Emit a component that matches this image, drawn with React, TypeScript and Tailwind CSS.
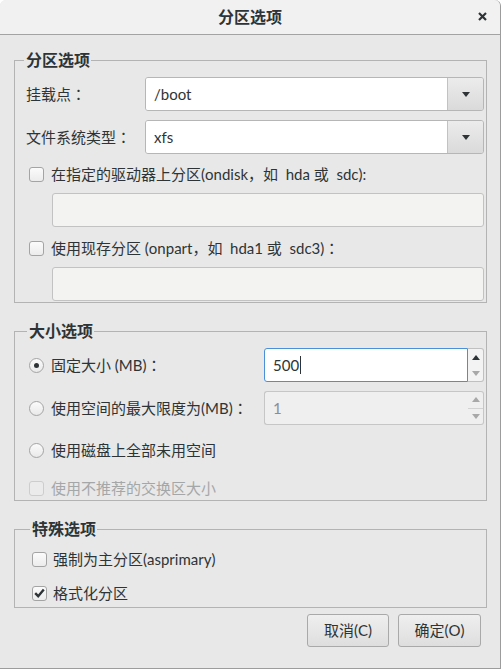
import React from "react";

const font = "font-['Lato','Noto_Sans_CJK_SC',sans-serif]";

// centred full-width colon, as GTK draws it
function Colon() {
  return <span className="font-['Noto_Sans_CJK_TC',sans-serif]">：</span>;
}

function Tri({ up, color }: { up?: boolean; color: string }) {
  return (
    <svg width="8" height="5" viewBox="0 0 8 5">
      <polygon points={up ? "0,5 8,5 4,0" : "0,0 8,0 4,5"} fill={color} />
    </svg>
  );
}

function Check({ checked, disabled }: { checked?: boolean; disabled?: boolean }) {
  return (
    <span
      className={`w-[15px] h-[15px] shrink-0 rounded-[3px] border flex items-center justify-center ${
        disabled
          ? "border-[#cdcdcd] bg-[#ebebeb]"
          : "border-[#a4a4a4] bg-gradient-to-b from-[#fbfbfb] to-[#ececec]"
      }`}
    >
      {checked && (
        <svg width="11" height="10" viewBox="0 0 11 10">
          <path d="M1.2 5.2 L4.2 8.2 L9.8 1.5" stroke="#2e3436" strokeWidth="2.4" fill="none" />
        </svg>
      )}
    </span>
  );
}

function Radio({ checked }: { checked?: boolean }) {
  return (
    <span className="w-[15px] h-[15px] shrink-0 rounded-full border border-[#a4a4a4] bg-gradient-to-b from-[#fbfbfb] to-[#e9e9e9] flex items-center justify-center">
      {checked && <span className="w-[5px] h-[5px] rounded-full bg-[#2e3436]" />}
    </span>
  );
}

function Combo({ value }: { value: string }) {
  return (
    <div className="flex-1 h-[34px] flex rounded-[3px] border border-[#b6b6b6] overflow-hidden">
      <div className="flex-1 bg-white flex items-center pl-[8px] text-[15px]">{value}</div>
      <div className="w-[36px] border-l border-[#c2c2c2] bg-gradient-to-b from-[#ececec] to-[#dadada] flex items-center justify-center">
        <Tri color="#2e3436" />
      </div>
    </div>
  );
}

function Spin({ value, focused, disabled }: { value: string; focused?: boolean; disabled?: boolean }) {
  return (
    <div className="flex-1 h-[34px] flex">
      <div
        className={`flex-1 flex items-center pl-[8px] text-[15px] rounded-l-[3px] border ${
          focused
            ? "bg-white border-[#4a90d9]"
            : "bg-[#efefef] border-[#c6c6c6] border-r-0 text-[#8b8e8f]"
        }`}
      >
        {value}
        {focused && <span className="w-px h-[18px] bg-[#2e3436] ml-px" />}
      </div>
      <div
        className={`w-[16px] flex flex-col rounded-r-[3px] border border-l-0 ${
          disabled ? "bg-[#efefef] border-[#c6c6c6]" : "bg-[#f3f3f3] border-[#c0c0c0]"
        }`}
      >
        <div className={`flex-1 flex items-center justify-center ${disabled ? "border-b border-[#d2d2d2]" : ""}`}>
          <Tri up color={disabled ? "#a8a8a8" : "#2e3436"} />
        </div>
        <div className="flex-1 flex items-center justify-center">
          <Tri color="#a8a8a8" />
        </div>
      </div>
    </div>
  );
}

function Entry() {
  return <div className="h-[34px] ml-[26px] rounded-[3px] border border-[#c2c2c2] bg-[#f3f3f2]" />;
}

function Legend({ children }: { children: React.ReactNode }) {
  return (
    <legend className="-ml-[2px] pl-[2px] pr-[1px] h-[20px] leading-[20px] text-[16px] font-bold text-[#2e3436] bg-[#e8e8e8]">
      {children}
    </legend>
  );
}

export default function App() {
  return (
    <div className={`${font} w-[501px] h-[669px] bg-[#e8e8e8] border-r border-b border-[#9c9c9c] rounded-t-[6px] flex flex-col text-[#2e3436]`}>
      {/* Title bar */}
      <div className="h-[35px] shrink-0 relative flex items-center justify-center bg-[#f1f1f1] border-b border-[#a3a3a3] rounded-t-[6px]">
        <span className="text-[16px] font-bold">分区选项</span>
        <svg className="absolute right-[13px] top-[12px]" width="9" height="9" viewBox="0 0 9 9">
          <path d="M1 1 L8 8 M8 1 L1 8" stroke="#2e3436" strokeWidth="2.2" />
        </svg>
      </div>

      <div className="pl-[14px] pr-[13px]">
        {/* 分区选项 */}
        <fieldset className="mt-[15px] border border-[#b3b3b3] pl-[11px] pr-[2px] pt-[7px] pb-[1px] text-[15px]">
          <Legend>分区选项</Legend>
          <div className="h-[34px] flex items-center">
            <span className="w-[119px]">挂载点<Colon /></span>
            <Combo value="/boot" />
          </div>
          <div className="mt-[9px] h-[34px] flex items-center">
            <span className="w-[119px]">文件系统类型<Colon /></span>
            <Combo value="xfs" />
          </div>
          <div className="mt-[10px] h-[20px] flex items-center gap-[7px] ml-[3px]">
            <Check />
            <span className="whitespace-pre">在指定的驱动器上分区(ondisk，如  hda 或  sdc):</span>
          </div>
          <div className="mt-[9px]">
            <Entry />
          </div>
          <div className="mt-[11px] h-[20px] flex items-center gap-[7px] ml-[3px]">
            <Check />
            <span className="whitespace-pre">使用现存分区 (onpart，如  hda1 或  sdc3)<Colon /></span>
          </div>
          <div className="mt-[9px]">
            <Entry />
          </div>
        </fieldset>

        {/* 大小选项 */}
        <fieldset className="mt-[18px] border border-[#b3b3b3] pl-[14px] pr-[2px] pt-[7px] pb-[2px] text-[15px]">
          <Legend>大小选项</Legend>
          <div className="h-[34px] flex items-center">
            <div className="w-[235px] flex items-center gap-[7px]">
              <Radio checked />
              <span>固定大小 (MB)<Colon /></span>
            </div>
            <Spin value="500" focused />
          </div>
          <div className="mt-[9px] h-[34px] flex items-center">
            <div className="w-[235px] flex items-center gap-[7px]">
              <Radio />
              <span>使用空间的最大限度为(MB)<Colon /></span>
            </div>
            <Spin value="1" disabled />
          </div>
          <div className="mt-[15px] h-[20px] flex items-center gap-[7px]">
            <Radio />
            <span>使用磁盘上全部未用空间</span>
          </div>
          <div className="mt-[18px] h-[20px] flex items-center gap-[7px] text-[#a4a7a8]">
            <Check disabled />
            <span>使用不推荐的交换区大小</span>
          </div>
        </fieldset>

        {/* 特殊选项 */}
        <fieldset className="mt-[18px] border border-[#b3b3b3] pl-[17px] pr-[2px] pt-[10px] pb-[4px] text-[15px]">
          <Legend>特殊选项</Legend>
          <div className="h-[20px] flex items-center gap-[6px]">
            <Check />
            <span>强制为主分区(asprimary)</span>
          </div>
          <div className="mt-[14px] h-[20px] flex items-center gap-[6px]">
            <Check checked />
            <span>格式化分区</span>
          </div>
        </fieldset>

        <div className="mt-[6px] mr-[6px] flex justify-end gap-[9px]">
          <button className="w-[82px] h-[33px] rounded-[3px] border border-[#a9a9a9] bg-gradient-to-b from-[#efefef] to-[#dedede] text-[15px] text-[#2e3436]">
            取消(C)
          </button>
          <button className="w-[83px] h-[33px] rounded-[3px] border border-[#a9a9a9] bg-gradient-to-b from-[#efefef] to-[#dedede] text-[15px] text-[#2e3436]">
            确定(O)
          </button>
        </div>
      </div>
    </div>
  );
}
